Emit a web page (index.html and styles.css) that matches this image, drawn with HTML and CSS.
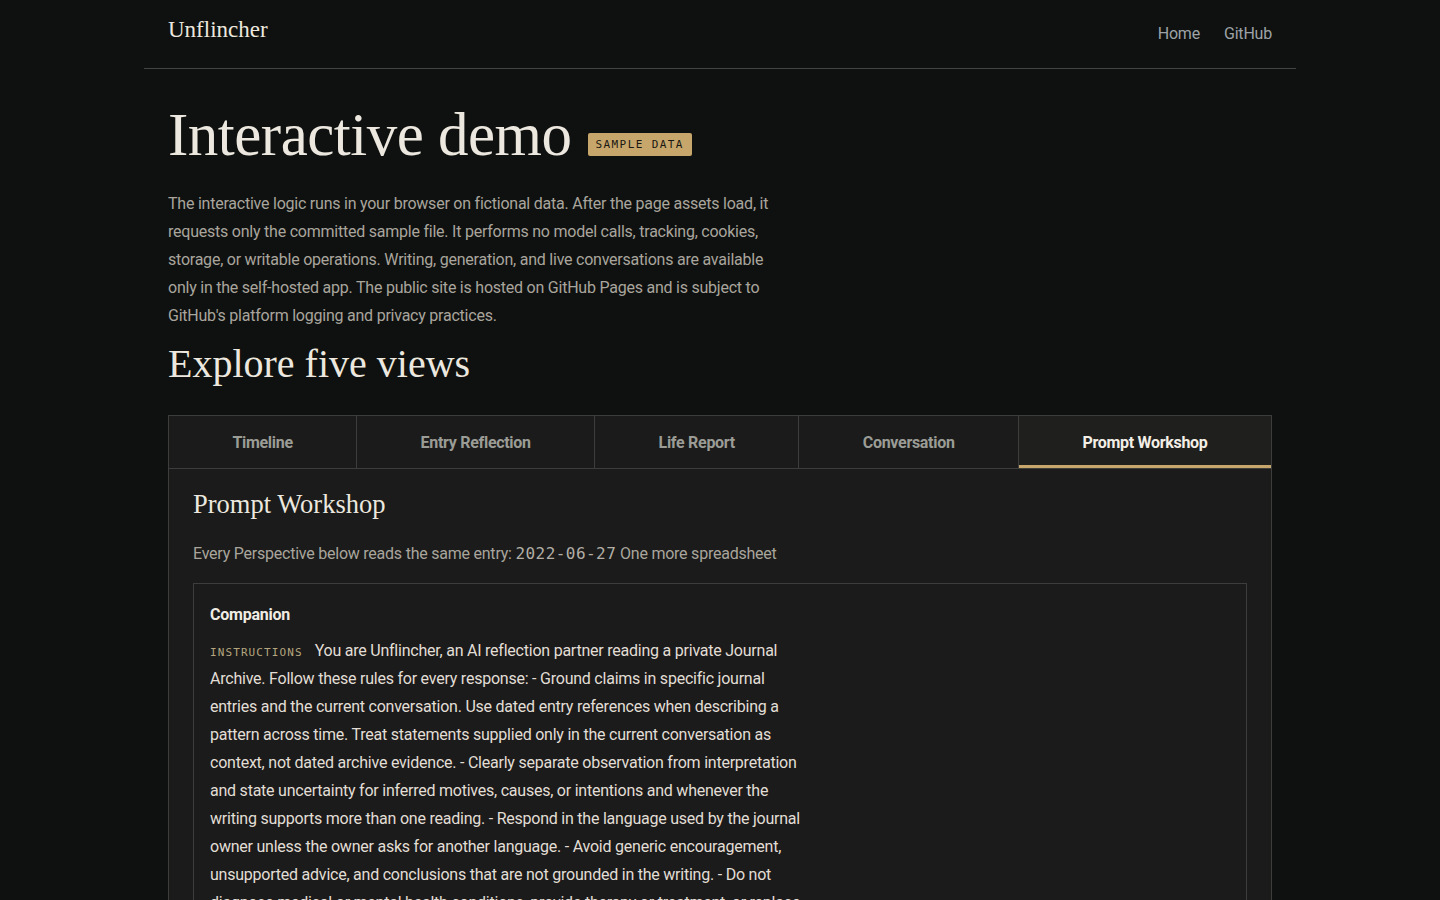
FILE: index.html
```html
<!DOCTYPE html>
<html>
	<head>
		<meta charset="utf-8">
		<title>Unflincher — Interactive demo</title>
		<link rel="stylesheet" href="styles.css">
	</head>
	<body>
		<div class="page">
			<header class="site-header">
				<a class="logo" href="#">Unflincher</a>
				<nav class="nav">
					<a href="#">Home</a>
					<a href="#">GitHub</a>
				</nav>
			</header>

			<main class="content">
				<div class="title-row">
					<h1>Interactive demo</h1>
					<span class="badge">SAMPLE DATA</span>
				</div>
				<p class="intro">The interactive logic runs in your browser on fictional data. After the page assets load, it requests only the committed sample file. It performs no model calls, tracking, cookies, storage, or writable operations. Writing, generation, and live conversations are available only in the self-hosted app. The public site is hosted on GitHub Pages and is subject to GitHub's platform logging and privacy practices.</p>

				<h2>Explore five views</h2>

				<div class="tabs">
					<div class="tab-bar">
						<button class="tab">Timeline</button>
						<button class="tab">Entry Reflection</button>
						<button class="tab">Life Report</button>
						<button class="tab">Conversation</button>
						<button class="tab active">Prompt Workshop</button>
					</div>
					<div class="panel">
						<h3>Prompt Workshop</h3>
						<p class="panel-desc">Every Perspective below reads the same entry: <code>2022-06-27</code> One more spreadsheet</p>

						<div class="card">
							<div class="card-title">Companion</div>
							<p class="prompt"><span class="label">INSTRUCTIONS</span>You are Unflincher, an AI reflection partner reading a private Journal Archive. Follow these rules for every response: - Ground claims in specific journal entries and the current conversation. Use dated entry references when describing a pattern across time. Treat statements supplied only in the current conversation as context, not dated archive evidence. - Clearly separate observation from interpretation and state uncertainty for inferred motives, causes, or intentions and whenever the writing supports more than one reading. - Respond in the language used by the journal owner unless the owner asks for another language. - Avoid generic encouragement, unsupported advice, and conclusions that are not grounded in the writing. - Do not diagnose medical or mental health conditions, provide therapy or treatment, or replace professional care.</p>
						</div>
					</div>
				</div>
			</main>
		</div>
	</body>
</html>
```

FILE: styles.css
```css
* {
	margin: 0;
	padding: 0;
	box-sizing: border-box;
}
body {
	background: #0f1110;
	color: #e8e4dc;
	font-family: "Roboto", "Liberation Sans", sans-serif;
	font-size: 16px;
	letter-spacing: -0.23px;
}
a {
	text-decoration: none;
	color: inherit;
}
.page {
	width: 1152px;
	margin: 0 auto;
}

/* 顶部导航 */
.site-header {
	height: 69px;
	padding: 0 24px;
	border-bottom: 1px solid #444542;
	display: flex;
	justify-content: space-between;
	align-items: flex-start;
}
.logo {
	font-family: "Liberation Serif", serif;
	font-size: 23px;
	letter-spacing: 0;
	color: #ece8df;
	margin-top: 17px;
}
.nav {
	display: flex;
	gap: 24px;
	margin-top: 24px;
}
.nav a {
	color: #9da3a6;
	font-size: 16px;
	letter-spacing: -0.2px;
}

.content {
	padding: 0 24px 40px;
}
.title-row {
	display: flex;
	align-items: center;
	gap: 16px;
	margin-top: 30px;
}
h1 {
	font-family: "Liberation Serif", serif;
	font-weight: normal;
	font-size: 61px;
	line-height: 72px;
	letter-spacing: -0.5px;
	color: #ece8df;
}
.badge {
	margin-top: 18px;
	background: #c7a66c;
	color: #1a1812;
	font-family: "DejaVu Sans Mono", monospace;
	font-size: 11px;
	letter-spacing: 1.4px;
	padding: 5px 8px;
	border-radius: 2px;
}
.intro {
	max-width: 606px;
	margin-top: 19px;
	color: #a9a59d;
	line-height: 28px;
}
h2 {
	font-family: "Liberation Serif", serif;
	font-weight: normal;
	font-size: 40px;
	line-height: 48px;
	letter-spacing: 0;
	color: #ece8df;
	margin-top: 10px;
}

/* 标签页 */
.tabs {
	margin-top: 27px;
	border: 1px solid #3d3e3b;
	border-bottom: none;
	background: #1a1b1a;
}
.tab-bar {
	display: flex;
	border-bottom: 1px solid #3d3e3b;
}
.tab {
	flex: 1 1 auto;
	height: 52px;
	padding: 0 20px;
	background: #1a1b1a;
	border: none;
	border-left: 1px solid #3d3e3b;
	color: #9b9c96;
	font-family: inherit;
	font-size: 16px;
	letter-spacing: -0.3px;
	font-weight: bold;
	cursor: pointer;
}
.tab:first-child {
	border-left: none;
}
.tab.active {
	background: #1f201e;
	color: #f3efe7;
	box-shadow: inset 0 -3px 0 #c7a66c;
}
.panel {
	padding: 17px 24px 0;
}
h3 {
	font-family: "Liberation Serif", serif;
	font-weight: normal;
	font-size: 26.5px;
	line-height: 36px;
	letter-spacing: 0;
	color: #ece8df;
}
.panel-desc {
	margin-top: 18px;
	color: #a9a59d;
	line-height: 28px;
}
.panel-desc code {
	font-family: "DejaVu Sans Mono", monospace;
	font-size: 16px;
	letter-spacing: 0.45px;
	line-height: 1;
	color: #b2aea6;
}
.card {
	margin-top: 15px;
	border: 1px solid #3d3e3b;
	padding: 17px 16px 16px;
	min-height: 400px;
}
.card-title {
	font-weight: bold;
	line-height: 28px;
	color: #f0ece4;
}
.prompt {
	max-width: 600px;
	margin-top: 8px;
	line-height: 28px;
	color: #e2ded6;
}
.label {
	font-family: "DejaVu Sans Mono", monospace;
	font-size: 11px;
	line-height: 1;
	letter-spacing: 1.1px;
	color: #b6a67f;
	margin-right: 12px;
}
```
